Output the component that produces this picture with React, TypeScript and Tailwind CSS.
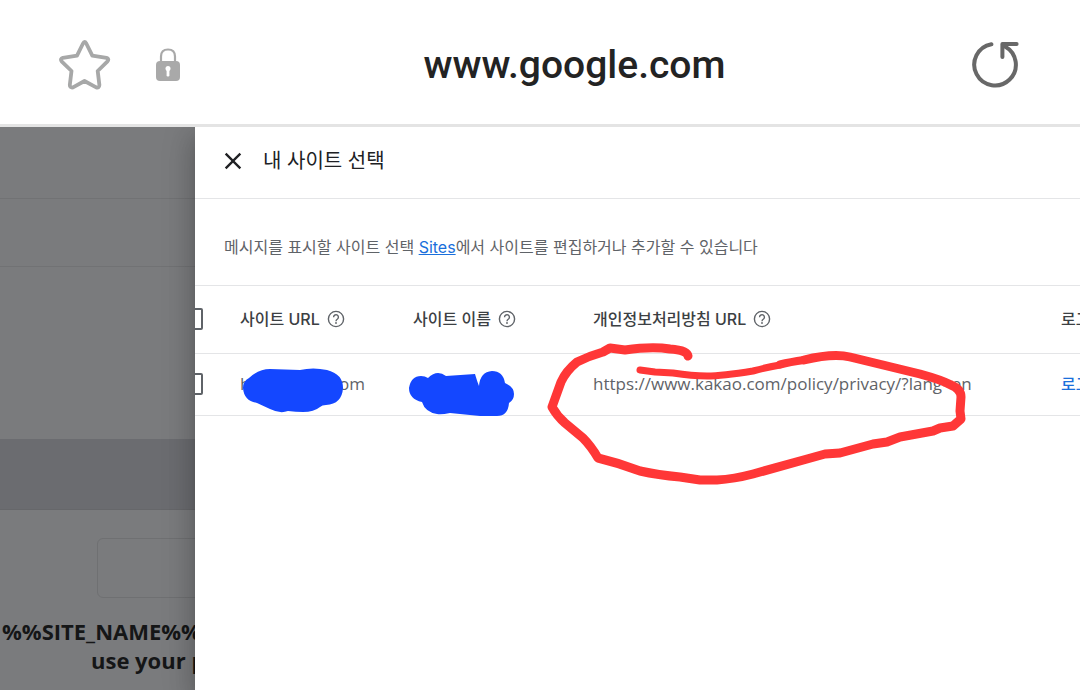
import { MdClose } from "react-icons/md";

const StarIcon = () => (
  <svg width="52" height="52" viewBox="0 0 52 52" fill="none">
    <path
      d="M24 4.5 Q25.5 1.5 27.3 4.5 L33.3 16.6 L47.5 18.8 Q50.5 19.8 48.5 22.3 L38.7 32 L40.4 46 Q40.2 49.2 37.2 48.4 L25.5 42 L14 48.4 Q10.8 49 10.8 46 L12.5 32 L2.6 22.3 Q0.9 19.8 3.9 18.8 L18 16.6 Z"
      stroke="#a7a8a8"
      strokeWidth="3.8"
      strokeLinejoin="round"
    />
  </svg>
);

const LockIcon = () => (
  <svg width="26" height="34" viewBox="0 0 26 34" fill="none">
    <path d="M6 14 V8.5 Q6 1.5 13 1.5 Q20 1.5 20 8.5 V14" stroke="#a9a9a9" strokeWidth="2.2" />
    <rect x="1" y="13" width="24" height="20" rx="4" fill="#a9a9a9" />
    <circle cx="13" cy="20.5" r="2.5" fill="#fff" />
    <rect x="11.6" y="20" width="2.8" height="8.5" rx="1.2" fill="#fff" />
  </svg>
);

const ReloadIcon = () => (
  <svg width="48" height="50" viewBox="0 0 48 50" fill="none" stroke="#686868" strokeWidth="4" strokeLinecap="round">
    <path d="M19.4 4.2 A20.8 20.8 0 1 0 33 6.4" />
    <path d="M30.4 17 V4 H44.6" strokeLinejoin="round" />
  </svg>
);

const HelpIcon = () => (
  <svg width="20" height="20" viewBox="0 0 20 20" fill="none" stroke="#5f6368" strokeWidth="1.4">
    <circle cx="10" cy="10" r="7.6" />
    <path d="M7.6 8.3 A2.4 2.4 0 1 1 11.5 10 Q10 11 10 12.2" />
    <circle cx="10" cy="14" r="0.9" fill="#5f6368" stroke="none" />
  </svg>
);

const BrowserBar = () => (
  <header className="relative z-20 flex h-[127px] shrink-0 items-center justify-between border-b-3 border-[#e4e4e4] bg-white pt-1.5 pr-[60px] pl-[59px]">
    <div className="flex items-center gap-11">
      <button aria-label="Bookmark">
        <StarIcon />
      </button>
      <LockIcon />
    </div>
    <span className="mr-1 text-[39px] font-medium text-[#232323]">www.google.com</span>
    <button aria-label="Reload">
      <ReloadIcon />
    </button>
  </header>
);

// Dimmed page that stays visible behind the drawer
const PageBehind = () => (
  <div className="w-[195px] shrink-0 overflow-hidden bg-[#7a7b7d]">
    <div className="h-18 border-b border-[#717274]" />
    <div className="h-17 border-b border-[#717274]" />
    <div className="h-43" />
    <div className="h-[71px] border-b border-[#66676a] bg-[#6b6c70]" />
    <div className="mt-7 ml-[97px] h-[60px] w-60 rounded-md border border-[#6f7072]" />
    <div className="mt-[19px] pl-0.5 font-['Open_Sans',sans-serif] text-[22px] leading-[29px] font-bold whitespace-nowrap text-[#151617]">
      <p>%%SITE_NAME%%</p>
      <p className="pl-[89px]">use your p</p>
    </div>
  </div>
);

const columns = ["사이트 URL", "사이트 이름", "개인정보처리방침 URL"];

const Checkbox = ({ label }: { label: string }) => (
  <input
    type="checkbox"
    aria-label={label}
    className="block size-[22px] appearance-none rounded-xs border-2 border-[#5f6368]"
  />
);

const SitesTable = () => (
  <div className="overflow-hidden border-t border-[#e4e5e7]">
    <table className="-ml-3.5 w-[calc(100%+14px)] table-fixed text-left whitespace-nowrap">
      <colgroup>
        <col className="w-[59px]" />
        <col className="w-[173px]" />
        <col className="w-[180px]" />
        <col className="w-[468px]" />
        <col />
      </colgroup>
      <thead>
        <tr className="h-[67px] border-b border-[#e4e5e7] text-[#3c4043]">
          <th className="p-0">
            <Checkbox label="모든 사이트" />
          </th>
          {columns.map((name) => (
            <th key={name} className="p-0 font-medium">
              <span className="flex items-center gap-1.5">
                {name}
                <HelpIcon />
              </span>
            </th>
          ))}
          <th className="overflow-hidden p-0 font-medium">로고</th>
        </tr>
      </thead>
      <tbody>
        <tr className="h-[62px] border-b border-[#e4e5e7] font-['Open_Sans','Noto_Sans_CJK_KR',sans-serif] text-[17px] text-[#5f6368]">
          <td className="p-0">
            <Checkbox label="사이트" />
          </td>
          <td className="p-0">
            <span className="flex w-[125px] justify-between">
              <span>h</span>
              <span>om</span>
            </span>
          </td>
          <td className="p-0" />
          <td className="p-0">https://www.kakao.com/policy/privacy/?lang=en</td>
          <td className="overflow-hidden p-0">
            <a href="#logo" className="text-base font-medium text-[#1a6fdb]">
              로고
            </a>
          </td>
        </tr>
      </tbody>
    </table>
  </div>
);

// Pen marks drawn over the table
const Markup = () => (
  <svg
    className="pointer-events-none absolute top-0 left-0"
    width="885"
    height="563"
    viewBox="195 127 885 563"
    fill="none"
    strokeLinecap="round"
    strokeLinejoin="round"
  >
    <path
      fill="#1447ff"
      d="M243 388 Q243 381 249 378 Q259 369 270 369 L300 370 Q313 367 327 370 Q343 374 343 388 Q342 404 326 405 Q322 405 320 407 Q314 412 303 412 Q296 412 288 411 Q280 414 270 409 L257 403 Q244 401 243 388 Z"
    />
    <path
      fill="#1447ff"
      d="M409 388 Q411 376 421 376 Q425 376 428 378 Q437 369 446 376 L475 374 Q477 381 479 386 Q480 372 492 371 Q503 371 505 383 Q514 387 514 394 Q514 400 509 403 Q508 416 497 416 L480 416 L450 413 Q441 415 437 414 Q425 412 422 402 Q409 399 409 388 Z"
    />
    <g stroke="#ff3737">
      <path
        strokeWidth="9"
        d="M688 356 Q687 350 670 349 Q652 346 625 350 L610 348 L603 352 Q589 356 577 362 Q566 371 561 382 L552 407 Q557 416 565 423 L583 438 Q591 446 598 458 Q619 463 640 471 Q658 475 680 477 L700 480 L717 480 Q734 479 753 474 L807 459 L825 454 L840 453 L873 444 L887 442 L900 437 L933 431 L940 428 L953 426 L961 419 L960 411 L961 397 Q961 389 951 385 Q942 380 920 374 L883 365 L850 357 Q833 353 804 360"
      />
      <path strokeWidth="8" d="M804 360 Q790 362 780 364.500" />
      <path strokeWidth="7" d="M780 365 Q768 367 753 371 Q722 376 707 376 Q692 376 673 373 L655 372 L640 370" />
    </g>
  </svg>
);

const SiteDrawer = () => (
  <main className="relative z-10 min-w-0 flex-1 bg-white font-['Inter','Noto_Sans_CJK_KR',sans-serif] shadow-[0_16px_24px_2px_rgba(0,0,0,0.14),0_6px_30px_5px_rgba(0,0,0,0.12),0_8px_10px_-5px_rgba(0,0,0,0.2)]">
    <div className="flex h-18 items-center gap-4 border-b border-[#e4e5e7] pb-1 pl-6">
      <button aria-label="닫기">
        <MdClose size={28} className="text-[#202124]" />
      </button>
      <h1 className="text-xl text-[#202124]">내 사이트 선택</h1>
    </div>
    <p className="px-[29px] pt-9 pb-[26px] leading-6 text-[#5f6368]">
      메시지를 표시할 사이트 선택{" "}
      <a href="#sites" className="text-[#1a6fdb] underline">
        Sites
      </a>
      에서 사이트를 편집하거나 추가할 수 있습니다
    </p>
    <SitesTable />
    <Markup />
  </main>
);

export default function App() {
  return (
    <div className="flex min-h-screen flex-col overflow-hidden bg-white font-['Roboto','Noto_Sans_CJK_KR',sans-serif] text-base">
      <BrowserBar />
      <div className="flex flex-1">
        <PageBehind />
        <SiteDrawer />
      </div>
    </div>
  );
}
